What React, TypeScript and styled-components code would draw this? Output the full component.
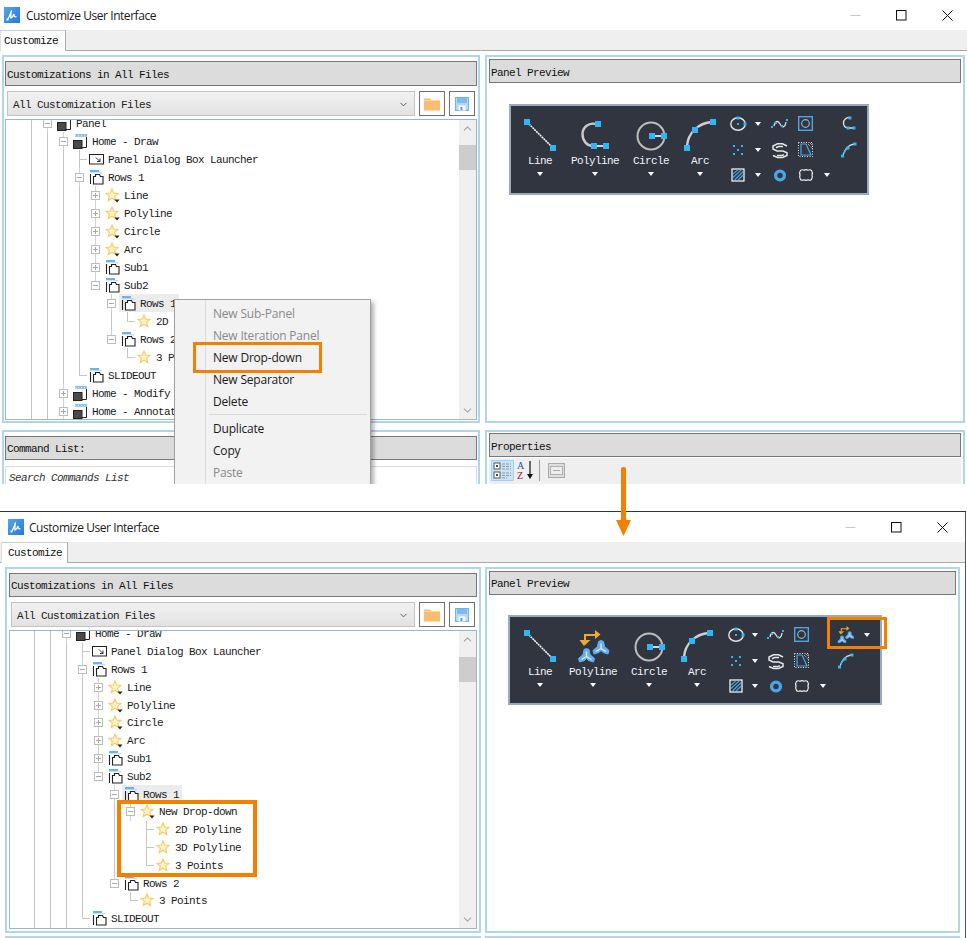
import React from 'react';
import styled, { createGlobalStyle } from 'styled-components';
import { ChevronDown, ChevronUp } from 'lucide-react';

const MONO = '"Liberation Mono", "DejaVu Sans Mono", monospace';
const UI = '"Open Sans", "Noto Sans", sans-serif';
const ORANGE = '#f58000';
const BLUE = '#33b5f5';
const ACCENT = '#4ba6e8';

const GlobalStyle = createGlobalStyle`
  html, body { margin: 0; padding: 0; background: #fff; }
  * { box-sizing: border-box; }
`;

const Page = styled.div`
  position: relative;
  width: 967px;
  height: 938px;
  overflow: hidden;
  background: #fff;
  font-family: ${MONO};
  font-size: 11px;
  letter-spacing: -0.6px;
  color: #111;
`;

const Win = styled.div<{ $height: number; $framed?: boolean }>`
  position: relative;
  height: ${p => p.$height}px;
  overflow: hidden;
  background: #fff;
  ${p => p.$framed && 'margin-top: 27px; border-top: 1px solid #333; border-right: 1px solid #555; width: 966px;'}
`;

const TitleBar = styled.div<{ $left: number; $gap: number }>`
  display: flex;
  align-items: center;
  height: 30px;
  padding-left: ${p => p.$left}px;
  gap: ${p => p.$gap}px;
`;

const TitleText = styled.span`
  font-family: ${UI};
  font-size: 12px;
  letter-spacing: -0.45px;
  color: #1a1a1a;
`;

const WinButtons = styled.div<{ $shift: number }>`
  display: flex;
  margin-left: auto;
  margin-right: ${p => p.$shift}px;
`;

const WinButton = styled.div`
  display: flex;
  align-items: center;
  justify-content: center;
  width: 46px;
  height: 30px;
`;

const TabStrip = styled.div<{ $height: number }>`
  display: flex;
  height: ${p => p.$height}px;
  background: #efefef;
  border-bottom: 1px solid #aaa;
`;

const Tab = styled.div<{ $left: number; $width: number; $pad: number }>`
  width: ${p => p.$width}px;
  margin-left: ${p => p.$left}px;
  padding-left: ${p => p.$pad}px;
  height: calc(100% + 1px);
  line-height: 20px;
  background: #fff;
  border-top: 1px solid #ccc;
  border-left: 1px solid #ddd;
  border-right: 1px solid #aaa;
`;

const Body = styled.div<{ $left: number; $columns: string; $rows: string; $gap: number; $rowGap: number }>`
  display: grid;
  grid-template-columns: ${p => p.$columns};
  grid-template-rows: ${p => p.$rows};
  column-gap: ${p => p.$gap}px;
  row-gap: ${p => p.$rowGap}px;
  padding: 4px 0 0 ${p => p.$left}px;
`;

const Panel = styled.div<{ $side: number; $top: number }>`
  display: flex;
  flex-direction: column;
  min-height: 0;
  overflow: hidden;
  border: 2px solid #aed8e8;
  padding: ${p => p.$top}px ${p => p.$side}px 0;
  background: #fff;
`;

const PanelHeader = styled.div<{ $height: number; $nudge?: number }>`
  flex: none;
  height: ${p => p.$height}px;
  line-height: ${p => p.$height - 2}px;
  padding: ${p => 1 + (p.$nudge ?? 0)}px 0 0 1px;
  background: #dcdcdc;
  border: 1px solid #777;
`;

const ComboRow = styled.div`
  flex: none;
  display: flex;
  gap: 4px;
  height: 25px;
  margin: 5px 2px 3px;
`;

const Combo = styled.div`
  flex: 1;
  display: flex;
  align-items: center;
  justify-content: space-between;
  padding: 2px 5px 0;
  background: linear-gradient(#f2f2f2, #e2e2e2);
  border: 1px solid #c4c4c4;
  color: #222;
`;

const IconButton = styled.div`
  display: flex;
  align-items: center;
  justify-content: center;
  width: 26px;
  background: #fff;
  border: 1px solid #6f6f6f;
`;

const TreeBox = styled.div<{ $height: number }>`
  flex: none;
  display: flex;
  height: ${p => p.$height}px;
  border: 1px solid #9fb6c6;
  overflow: hidden;
`;

const TreeList = styled.div<{ $left: number }>`
  flex: 1;
  min-width: 0;
  overflow: hidden;
  padding-left: ${p => p.$left}px;
`;

const TreeInner = styled.div`
  margin-top: -6px;
`;

const Scrollbar = styled.div`
  flex: none;
  display: flex;
  flex-direction: column;
  align-items: stretch;
  width: 17px;
  background: #f0f0f0;
  color: #a6a6a6;
`;

const ScrollButton = styled.div<{ $end?: boolean }>`
  display: flex;
  justify-content: center;
  align-items: center;
  height: 17px;
  ${p => p.$end && 'margin-top: auto;'}
`;

const ScrollThumb = styled.div<{ $top: number }>`
  height: 25px;
  margin-top: ${p => p.$top}px;
  background: #cdcdcd;
`;

const Row = styled.div<{ $height: number }>`
  display: flex;
  align-items: stretch;
  height: ${p => p.$height}px;
  white-space: nowrap;
`;

const GuideCell = styled.span<{ $on: boolean }>`
  flex: none;
  width: 16px;
  ${p => p.$on && `
    background: linear-gradient(#c6c6c6, #c6c6c6) 7.5px 0 / 1px 100% no-repeat;
  `}
`;

const ExpanderCell = styled.span<{ $last?: boolean }>`
  flex: none;
  display: flex;
  align-items: center;
  justify-content: center;
  width: 16px;
  background: linear-gradient(#d2d2d2, #d2d2d2) 7.5px 0 / 1px ${p => (p.$last ? '50%' : '100%')} no-repeat;
`;

const ExpanderBox = styled.span<{ $open: boolean }>`
  display: block;
  width: 9px;
  height: 9px;
  background-color: #fff;
  border: 1px solid #bcbcbc;
  background-image: linear-gradient(#a8a8a8, #a8a8a8)${p => (p.$open ? '' : ', linear-gradient(#a8a8a8, #a8a8a8)')};
  background-size: 5px 1px${p => (p.$open ? '' : ', 1px 5px')};
  background-position: center${p => (p.$open ? '' : ', center')};
  background-repeat: no-repeat;
`;

const ConnectorCell = styled.span<{ $corner: boolean }>`
  flex: none;
  width: 16px;
  background:
    linear-gradient(#c6c6c6, #c6c6c6) 7.5px 0 / 1px ${p => (p.$corner ? '50%' : '100%')} no-repeat,
    linear-gradient(#c6c6c6, #c6c6c6) 8px 50% / 8px 1px no-repeat;
`;

const NodeBody = styled.span<{ $selected?: boolean }>`
  display: flex;
  align-items: center;
  padding-right: 3px;
  background: ${p => (p.$selected ? '#ececec' : 'transparent')};
`;

const NodeIcon = styled.span`
  display: flex;
  align-items: center;
  width: 21px;
  padding-left: 2px;
`;

const NodeLabel = styled.span`
  padding-top: 1px;
  color: #1a1a1a;
`;

const Ribbon = styled.div<{ $width: number; $height: number; $top: number; $left: number }>`
  flex: none;
  display: flex;
  width: ${p => p.$width}px;
  height: ${p => p.$height}px;
  margin: ${p => p.$top}px 0 0 ${p => p.$left}px;
  background: #30353f;
  border: 2px solid #9aa9bb;
`;

const LargeTool = styled.div<{ $width: number }>`
  flex: none;
  display: flex;
  flex-direction: column;
  align-items: center;
  width: ${p => p.$width}px;
  padding-top: 13px;
`;

const LargeIcon = styled.div`
  flex: none;
  height: 36px;
  display: flex;
  justify-content: center;
`;

const ToolLabel = styled.div`
  height: 12px;
  line-height: 13px;
  color: #eef4fb;
  white-space: nowrap;
`;

const Caret = styled.span`
  display: block;
  width: 0;
  height: 0;
  border-left: 3px solid transparent;
  border-right: 3px solid transparent;
  border-top: 4px solid #fff;
`;

const LargeCaret = styled(Caret)`
  margin-top: 5px;
`;

const SmallGrid = styled.div<{ $columns: string; $left: number }>`
  display: grid;
  grid-template-columns: ${p => p.$columns};
  grid-auto-rows: 25.5px;
  margin-left: ${p => p.$left}px;
  padding-top: 5.5px;
`;

const SmallCell = styled.div`
  display: flex;
  align-items: center;
  justify-content: center;
`;

const SearchBox = styled.div`
  flex: none;
  height: 30px;
  margin-top: 6px;
  padding: 5px 3px;
  line-height: 13px;
  font-style: italic;
  background: #fff;
  border: 1px solid #dcdcdc;
  color: #333;
`;

const PropToolbar = styled.div`
  flex: 1;
  display: flex;
  align-items: flex-start;
  padding: 2px 0 0 2px;
  margin-top: 1px;
  background: #efefef;
`;

const ToolButton = styled.div<{ $active?: boolean }>`
  display: flex;
  align-items: center;
  justify-content: center;
  width: 23px;
  height: 21px;
  ${p => p.$active && 'background: #cce4f7; border: 1px solid #99d1ff;'}
`;

const ToolSep = styled.div`
  width: 1px;
  height: 21px;
  margin: 0 5px 0 2px;
  background: #a0a0a0;
`;

const ContextMenu = styled.div`
  position: absolute;
  left: 174px;
  top: 299px;
  width: 197px;
  height: 210px;
  padding-top: 2.5px;
  font-family: ${UI};
  font-size: 12px;
  letter-spacing: -0.2px;
  background: linear-gradient(90deg, #f2f2f2 30px, #dedede 30px, #dedede 31px, #f2f2f2 31px);
  border: 1px solid #a0a0a0;
  box-shadow: 3px 3px 4px rgba(0, 0, 0, 0.3);
`;

const MenuItem = styled.div<{ $disabled?: boolean }>`
  height: 22px;
  line-height: 22px;
  padding-left: 38px;
  color: ${p => (p.$disabled ? '#8a8a8a' : '#1a1a1a')};
`;

const MenuSep = styled.div`
  height: 1px;
  margin: 1.5px 3px 3px 34px;
  background: #d8d8d8;
`;

const Callout = styled.div<{ $x: number; $y: number; $w: number; $h: number; $border: number }>`
  position: absolute;
  left: ${p => p.$x}px;
  top: ${p => p.$y}px;
  width: ${p => p.$w}px;
  height: ${p => p.$h}px;
  border: ${p => p.$border}px solid ${ORANGE};
  pointer-events: none;
`;

const FlowArrow = styled.svg`
  position: absolute;
  left: 614px;
  top: 466px;
`;

function AppLogo() {
  return (
    <svg width="16" height="16" viewBox="0 0 16 16">
      <defs>
        <linearGradient id="logoFill" x1="0" y1="0" x2="1" y2="1">
          <stop offset="0" stopColor="#4ea6ee" />
          <stop offset="1" stopColor="#2a78d8" />
        </linearGradient>
      </defs>
      <rect width="16" height="16" fill="url(#logoFill)" />
      <path d="M4 12 C5.5 9.5 6.5 6.5 7.5 3.5 C7 7 6.5 9 7 11 C8.5 10 9.5 8.5 10 7 C10 9 10.5 10.5 12.5 9.5" fill="none" stroke="#fff" strokeWidth="1.3" />
      <rect x="2.5" y="11.5" width="2" height="2" fill="#fff" />
    </svg>
  );
}

function WindowControls({ shift }: { shift: number }) {
  return (
    <WinButtons $shift={shift}>
      <WinButton>
        <svg width="11" height="11" viewBox="0 0 11 11"><path d="M0.5 5.5 H10.5" stroke="#c8c8c8" /></svg>
      </WinButton>
      <WinButton>
        <svg width="11" height="11" viewBox="0 0 11 11"><rect x="0.5" y="0.5" width="9.5" height="9.5" fill="none" stroke="#111" /></svg>
      </WinButton>
      <WinButton>
        <svg width="11" height="11" viewBox="0 0 11 11"><path d="M0.5 0.5 L10.5 10.5 M10.5 0.5 L0.5 10.5" stroke="#111" /></svg>
      </WinButton>
    </WinButtons>
  );
}

function FolderIcon() {
  return (
    <svg width="16" height="14" viewBox="0 0 16 14">
      <path d="M0 1.5 H6 L7.5 3 H16 V13.5 H0 Z" fill="#fdbb6e" />
      <path d="M0 3.5 H16" stroke="#fdd6a4" />
    </svg>
  );
}

function SaveIcon() {
  return (
    <svg width="14" height="14" viewBox="0 0 14 14">
      <rect x="0.5" y="0.5" width="13" height="13" fill="#b5d9f5" stroke="#6fb1e8" />
      <rect x="2" y="1" width="10" height="5" fill="#7dbbec" />
      <rect x="3.5" y="8.5" width="7" height="5" fill="#fff" />
      <rect x="5.5" y="10" width="2" height="3" fill="#4f9bdc" />
    </svg>
  );
}

function PanelNodeIcon() {
  return (
    <svg width="15" height="15" viewBox="0 0 15 15">
      <path d="M2 1.4 H14" stroke="#86c1ee" strokeWidth="2.8" />
      <path d="M2 1.4 H14" stroke="#fff" strokeWidth="0.7" strokeDasharray="1 2" />
      <path d="M9 13.5 H13.5 V3" fill="none" stroke="#222" />
      <rect x="0.5" y="6.5" width="8.5" height="8" fill="#4a4a4a" stroke="#222" />
    </svg>
  );
}

function LauncherIcon() {
  return (
    <svg width="15" height="11" viewBox="0 0 15 11">
      <rect x="0.5" y="0.5" width="14" height="9.5" fill="#fff" stroke="#222" />
      <path d="M7 3.5 L11 7.5 M11 4.5 V7.5 H8" fill="none" stroke="#333" />
    </svg>
  );
}

function RowsIcon() {
  return (
    <svg width="15" height="15" viewBox="0 0 15 15">
      <path d="M1 1.2 H10" stroke="#6db3ea" strokeWidth="2.4" />
      <path d="M1.5 4 V14" stroke="#222" strokeWidth="1.1" />
      <path d="M4.5 14 V6.5 H6.5 V4.5 H10.5 L11.5 6.5 H14 V14 Z" fill="#fff" stroke="#222" strokeWidth="1.1" />
      <path d="M10 2.8 H13" stroke="#a9d4f4" />
    </svg>
  );
}

function StarIcon({ drop }: { drop?: boolean }) {
  return (
    <svg width="15" height="15" viewBox="0 0 15 15">
      <path d="M7 1 L8.7 5 L13 5.4 L9.7 8.2 L10.7 12.5 L7 10.2 L3.3 12.5 L4.3 8.2 L1 5.4 L5.3 5 Z" fill="#fff2c8" stroke="#f5cc62" strokeWidth="1.1" />
      {drop && <path d="M9.5 11.5 H14.5 L12 14.5 Z" fill="#222" />}
    </svg>
  );
}

type NodeKind = 'panel' | 'launcher' | 'rows' | 'star' | 'leaf';
type Handle = 'open' | 'closed' | 'openEnd' | 'tee' | 'corner';

interface TreeNode {
  depth: number;
  handle: Handle;
  kind: NodeKind;
  label: string;
  guides: number[];
  selected?: boolean;
}

const nodeIcons: Record<NodeKind, React.ReactNode> = {
  panel: <PanelNodeIcon />,
  launcher: <LauncherIcon />,
  rows: <RowsIcon />,
  star: <StarIcon drop />,
  leaf: <StarIcon />,
};

const g3 = [1, 2, 3];
const g4 = [1, 2, 3, 4];
const g46 = [1, 2, 3, 4, 6];

const sharedUpper: TreeNode[] = [
  { depth: 3, handle: 'open', kind: 'panel', label: 'Home - Draw', guides: [1, 2] },
  { depth: 4, handle: 'tee', kind: 'launcher', label: 'Panel Dialog Box Launcher', guides: g3 },
  { depth: 4, handle: 'open', kind: 'rows', label: 'Rows 1', guides: g3 },
  { depth: 5, handle: 'closed', kind: 'star', label: 'Line', guides: g4 },
  { depth: 5, handle: 'closed', kind: 'star', label: 'Polyline', guides: g4 },
  { depth: 5, handle: 'closed', kind: 'star', label: 'Circle', guides: g4 },
  { depth: 5, handle: 'closed', kind: 'star', label: 'Arc', guides: g4 },
  { depth: 5, handle: 'closed', kind: 'rows', label: 'Sub1', guides: g4 },
  { depth: 5, handle: 'openEnd', kind: 'rows', label: 'Sub2', guides: g4 },
  { depth: 6, handle: 'open', kind: 'rows', label: 'Rows 1', guides: g4, selected: true },
];

const beforeNodes: TreeNode[] = [
  { depth: 2, handle: 'open', kind: 'panel', label: 'Panel', guides: [1] },
  ...sharedUpper,
  { depth: 7, handle: 'corner', kind: 'leaf', label: '2D Polyline', guides: g46 },
  { depth: 6, handle: 'openEnd', kind: 'rows', label: 'Rows 2', guides: g4 },
  { depth: 7, handle: 'corner', kind: 'leaf', label: '3 Points', guides: g4 },
  { depth: 4, handle: 'corner', kind: 'rows', label: 'SLIDEOUT', guides: g3 },
  { depth: 3, handle: 'closed', kind: 'panel', label: 'Home - Modify', guides: [1, 2] },
  { depth: 3, handle: 'closed', kind: 'panel', label: 'Home - Annotate', guides: [1, 2] },
];

const afterNodes: TreeNode[] = [
  ...sharedUpper,
  { depth: 7, handle: 'open', kind: 'star', label: 'New Drop-down', guides: g46 },
  { depth: 8, handle: 'tee', kind: 'leaf', label: '2D Polyline', guides: [1, 2, 3, 4, 6] },
  { depth: 8, handle: 'tee', kind: 'leaf', label: '3D Polyline', guides: [1, 2, 3, 4, 6] },
  { depth: 8, handle: 'corner', kind: 'leaf', label: '3 Points', guides: [1, 2, 3, 4, 6] },
  { depth: 6, handle: 'openEnd', kind: 'rows', label: 'Rows 2', guides: g4 },
  { depth: 7, handle: 'corner', kind: 'leaf', label: '3 Points', guides: g4 },
  { depth: 4, handle: 'corner', kind: 'rows', label: 'SLIDEOUT', guides: g3 },
];

function TreeRow({ node, height }: { node: TreeNode; height: number }) {
  const { depth, handle, kind, label, guides, selected } = node;
  return (
    <Row $height={height}>
      {Array.from({ length: depth }, (_, i) => (
        <GuideCell key={i} $on={guides.includes(i)} />
      ))}
      {handle === 'tee' || handle === 'corner' ? (
        <ConnectorCell $corner={handle === 'corner'} />
      ) : (
        <ExpanderCell $last={handle === 'openEnd'}>
          <ExpanderBox $open={handle !== 'closed'} />
        </ExpanderCell>
      )}
      <NodeBody $selected={selected}>
        <NodeIcon>{nodeIcons[kind]}</NodeIcon>
        <NodeLabel>{label}</NodeLabel>
      </NodeBody>
    </Row>
  );
}

function Squares({ at }: { at: [number, number][] }) {
  return (
    <>
      {at.map(([x, y]) => (
        <rect key={`${x}-${y}`} x={x} y={y} width="6" height="6" fill={BLUE} />
      ))}
    </>
  );
}

function LineTool() {
  return (
    <svg width="36" height="36" viewBox="0 0 36 36">
      <path d="M5 3 L31 29" stroke="#fff" strokeWidth="1.5" strokeDasharray="2 0.6" />
      <Squares at={[[2, 0], [28, 26]]} />
    </svg>
  );
}

function PolylineTool() {
  return (
    <svg width="36" height="36" viewBox="0 0 36 36">
      <path d="M19 5 C11 3 5.5 9 5.5 15 C5.5 22 10 27 16 27" fill="none" stroke="#c9c9c9" strokeWidth="2.4" />
      <path d="M19 27 H28" stroke="#fff" strokeWidth="1.6" />
      <Squares at={[[18, 2], [14, 24], [26, 24]]} />
    </svg>
  );
}

function CircleTool() {
  return (
    <svg width="36" height="36" viewBox="0 0 36 36">
      <circle cx="18" cy="17" r="13.5" fill="none" stroke="#bdbdbd" strokeWidth="2" />
      <path d="M21 17 H29" stroke="#fff" strokeWidth="1.6" />
      <Squares at={[[16, 14], [28, 14]]} />
    </svg>
  );
}

function ArcTool() {
  return (
    <svg width="36" height="36" viewBox="0 0 36 36">
      <path d="M5 27 C6 14 16 4 30 3" fill="none" stroke="#cfcfcf" strokeWidth="2.4" />
      <Squares at={[[28, 0], [10, 8], [2, 26]]} />
    </svg>
  );
}

function Tripod({ x, y }: { x: number; y: number }) {
  return (
    <g transform={`translate(${x} ${y})`}>
      <path
        d="M0 -7 L2.5 -6 L3.5 -1 L8 3 L7 6.5 L2 5 L0 3 L-2 5 L-7 6.5 L-8 3 L-3.5 -1 L-2.5 -6 Z"
        fill="#62aef0"
        stroke="#62aef0"
        strokeLinejoin="round"
      />
      <path d="M0 -4 V1 L5 4 M0 1 L-5 4" fill="none" stroke="#d6eafb" strokeWidth="1.4" />
    </g>
  );
}

function MultiGlyph() {
  return (
    <>
      <path d="M10 15 V10 H22" fill="none" stroke="#f0a92c" strokeWidth="2" />
      <path d="M20 5 L25.5 9.5 L20 14 Z" fill="#f0a92c" />
      <path d="M4.5 15 H15.5 L9 21 Z" fill="#f0a92c" />
      <Tripod x={11.5} y={30.5} />
      <Tripod x={26} y={22.5} />
    </>
  );
}

function MultiTool() {
  return (
    <svg width="40" height="36" viewBox="-2 5 40 36">
      <MultiGlyph />
    </svg>
  );
}

function Dot({ x, y, size = 2 }: { x: number; y: number; size?: number }) {
  return <rect x={x - size / 2} y={y - size / 2} width={size} height={size} fill={BLUE} />;
}

const smallIcons: Record<string, React.ReactNode> = {
  circle: (
    <>
      <ellipse cx="12" cy="11" rx="7.2" ry="6.2" fill="none" stroke="#e2e2e2" strokeWidth="1.4" />
      <Dot x={12} y={5} size={3} />
      <Dot x={19} y={11} size={3} />
      <Dot x={12} y={11} />
    </>
  ),
  spline: (
    <>
      <path d="M6 13 C7 8 10 7 12 11 C14 15 17 15 18 9" fill="none" stroke="#e2e2e2" strokeWidth="1.3" />
      <Dot x={4} y={14} />
      <Dot x={8} y={10} />
      <Dot x={14} y={13} />
      <Dot x={19} y={7} />
    </>
  ),
  square: (
    <>
      <rect x="4.7" y="3.7" width="13.6" height="13.6" fill="none" stroke={ACCENT} strokeWidth="1.4" />
      <circle cx="11.5" cy="10.5" r="3.8" fill="none" stroke="#8fb6d6" strokeWidth="1.2" />
    </>
  ),
  points: (
    <>
      <Dot x={8} y={7} />
      <Dot x={16} y={7} />
      <Dot x={12} y={11} />
      <Dot x={8} y={15} />
      <Dot x={16} y={15} />
    </>
  ),
  offset: (
    <path d="M19 7 L14.5 4.8 H9.5 L5 7 V10 L9 12 H15 L19 13.8 V16.5 L14.5 18.5 H9.5 L5 16.5 M8 8.8 L10.5 7.6 H15 M16 15.8 L13.5 16.6 H9" fill="none" stroke="#e6e6e6" strokeWidth="1.5" />
  ),
  region: (
    <>
      <rect x="4.5" y="3.5" width="14" height="14" fill="none" stroke="#e6e6e6" strokeDasharray="1 1.5" />
      <path d="M7 5 H12 L17 16 H7 Z" fill="#30353f" stroke={ACCENT} strokeWidth="1.2" />
      <path d="M14 5 L19 10 M16 4 L19 7" stroke="#cfcfcf" strokeDasharray="1 1" />
    </>
  ),
  hatch: (
    <>
      <rect x="6" y="5" width="12" height="12" fill="none" stroke="#fff" strokeWidth="1.2" />
      <path d="M7 10 L12 5.6 M7 13.5 L15.5 5.6 M8.5 16 L17.2 7.5 M12 16 L17.2 11" stroke={ACCENT} strokeWidth="1.1" />
    </>
  ),
  donut: <circle cx="12" cy="11.5" r="4.4" fill="none" stroke={ACCENT} strokeWidth="3.4" />,
  cloud: (
    <path d="M6.5 6.5 Q8 5.2 10 6.2 Q12 5.2 14 6.2 Q16 5.2 17.5 6.5 Q19 8.5 18 11 Q19 13.5 17.5 15.5 Q16 16.8 14 15.8 Q12 16.8 10 15.8 Q8 16.8 6.5 15.5 Q5 13.5 6 11 Q5 8.5 6.5 6.5 Z" fill="none" stroke="#f2f2f2" strokeWidth="1.2" />
  ),
  cpoly: (
    <>
      <path d="M13 4.5 C9 4 6.5 7 6.5 10 C6.5 13.5 9 15 12 15 H16" fill="none" stroke="#dcdcdc" strokeWidth="1.4" />
      <Dot x={13} y={5} size={3} />
      <Dot x={11} y={15} size={3} />
      <Dot x={17} y={15} size={3} />
    </>
  ),
  arc: (
    <>
      <path d="M6 17 C7 11 11 6 17 5" fill="none" stroke="#dcdcdc" strokeWidth="1.4" />
      <path d="M7 14 C8 12 9 10 11 9" fill="none" stroke={BLUE} strokeWidth="1.4" />
      <Dot x={5.5} y={17} size={3} />
      <Dot x={11} y={9} size={3} />
      <Dot x={18} y={5} size={3} />
    </>
  ),
  multi: <MultiGlyph />,
};

function SmallTool({ name }: { name: string }) {
  if (name === '') return <SmallCell />;
  if (name === 'caret') return <SmallCell><Caret /></SmallCell>;
  if (name === 'multi') {
    return (
      <SmallCell>
        <svg width="20" height="20" viewBox="0 3 38 38">{smallIcons.multi}</svg>
      </SmallCell>
    );
  }
  return (
    <SmallCell>
      <svg width="24" height="22" viewBox="0 0 24 22">{smallIcons[name]}</svg>
    </SmallCell>
  );
}

function PanelRibbon({ variant }: { variant: 'before' | 'after' }) {
  const before = variant === 'before';
  const widths = before ? [58, 52, 60, 38] : [60, 46, 66, 30];
  const tools: [string, React.ReactNode][] = [
    ['Line', <LineTool />],
    ['Polyline', before ? <PolylineTool /> : <MultiTool />],
    ['Circle', <CircleTool />],
    ['Arc', <ArcTool />],
  ];
  const cells = before
    ? ['circle', 'caret', 'spline', 'square', '', 'cpoly',
       'points', 'caret', 'offset', 'region', '', 'arc',
       'hatch', 'caret', 'donut', 'cloud', 'caret', '']
    : ['circle', 'caret', 'spline', 'square', '', 'multi', 'caret',
       'points', 'caret', 'offset', 'region', '', 'arc', '',
       'hatch', 'caret', 'donut', 'cloud', 'caret', '', ''];
  return (
    <Ribbon
      $width={before ? 360 : 374}
      $height={before ? 91 : 90}
      $top={before ? 21 : 20}
      $left={before ? 20 : 19}
    >
      {tools.map(([label, icon], i) => (
        <LargeTool key={label} $width={widths[i]}>
          <LargeIcon>{icon}</LargeIcon>
          <ToolLabel>{label}</ToolLabel>
          <LargeCaret />
        </LargeTool>
      ))}
      <SmallGrid
        $left={before ? 7 : 12}
        $columns={before ? '24px 16px 28px 24px 18px 26px' : '24px 14px 28px 24px 18px 28px 14px'}
      >
        {cells.map((name, i) => <SmallTool key={i} name={name} />)}
      </SmallGrid>
    </Ribbon>
  );
}

function FilesPanel({ nodes, rowHeight, side, treeHeight, headerHeight, headerNudge, treeLeft, thumbTop }: {
  nodes: TreeNode[];
  rowHeight: number;
  side: number;
  treeHeight: number;
  headerHeight: number;
  headerNudge: number;
  treeLeft: number;
  thumbTop: number;
}) {
  return (
    <Panel $side={side} $top={4}>
      <PanelHeader $height={headerHeight} $nudge={headerNudge}>Customizations in All Files</PanelHeader>
      <ComboRow>
        <Combo>
          All Customization Files
          <ChevronDown size={11} strokeWidth={2} color="#555" />
        </Combo>
        <IconButton><FolderIcon /></IconButton>
        <IconButton><SaveIcon /></IconButton>
      </ComboRow>
      <TreeBox $height={treeHeight}>
        <TreeList $left={treeLeft}>
          <TreeInner>
            {nodes.map((node, i) => <TreeRow key={i} node={node} height={rowHeight} />)}
          </TreeInner>
        </TreeList>
        <Scrollbar>
          <ScrollButton><ChevronUp size={13} strokeWidth={2} /></ScrollButton>
          <ScrollThumb $top={thumbTop} />
          <ScrollButton $end><ChevronDown size={13} strokeWidth={2} /></ScrollButton>
        </Scrollbar>
      </TreeBox>
    </Panel>
  );
}

function PropertyTools() {
  return (
    <PropToolbar>
      <ToolButton $active>
        <svg width="19" height="17" viewBox="0 0 19 17">
          <rect x="1" y="1" width="6" height="6" fill="#fff" stroke="#555" />
          <rect x="1" y="10" width="6" height="6" fill="#fff" stroke="#555" />
          <path d="M3 4 H5 M4 3 V5 M3 13 H5 M4 12 V14" stroke="#111" />
          <path d="M9 2 H18 M9 4.5 H18 M9 7 H18 M9 11 H18 M9 13.5 H18 M9 16 H14" stroke="#8c9aa8" strokeDasharray="3 1" />
        </svg>
      </ToolButton>
      <ToolButton>
        <svg width="20" height="19" viewBox="0 0 20 19">
          <text x="1" y="8" fontFamily='"Liberation Serif", serif' fontSize="10" letterSpacing="0" fill="#2a4fc0">A</text>
          <text x="1" y="18" fontFamily='"Liberation Serif", serif' fontSize="10" letterSpacing="0" fill="#a02020">Z</text>
          <path d="M14 0 V16" stroke="#111" strokeWidth="1.2" />
          <path d="M11 13 H17 L14 18 Z" fill="#111" />
        </svg>
      </ToolButton>
      <ToolSep />
      <ToolButton>
        <svg width="17" height="15" viewBox="0 0 17 15">
          <rect x="0.5" y="0.5" width="16" height="14" fill="#dedede" stroke="#a8a8a8" />
          <rect x="2.5" y="3.5" width="12" height="8" fill="#eee" stroke="#b0b0b0" />
          <path d="M5 7.5 H12" stroke="#a8a8a8" />
        </svg>
      </ToolButton>
    </PropToolbar>
  );
}

function App() {
  return (
    <Page>
      <GlobalStyle />

      <Win $height={484}>
        <TitleBar $left={4} $gap={6}>
          <AppLogo />
          <TitleText>Customize User Interface</TitleText>
          <WindowControls shift={-3} />
        </TitleBar>
        <TabStrip $height={21}>
          <Tab $left={0} $width={66} $pad={3}>Customize</Tab>
        </TabStrip>
        <Body $left={2} $columns="478px 480px" $rows="368px 60px" $gap={5} $rowGap={7}>
          <FilesPanel
            nodes={beforeNodes}
            rowHeight={18}
            side={1}
            treeHeight={301}
            headerHeight={25}
            headerNudge={1}
            treeLeft={1}
            thumbTop={8}
          />
          <Panel $side={2} $top={2}>
            <PanelHeader $height={24} $nudge={1}>Panel Preview</PanelHeader>
            <PanelRibbon variant="before" />
          </Panel>
          <Panel $side={1} $top={4}>
            <PanelHeader $height={24}>Command List:</PanelHeader>
            <SearchBox>Search Commands List</SearchBox>
          </Panel>
          <Panel $side={2} $top={1}>
            <PanelHeader $height={24} $nudge={1}>Properties</PanelHeader>
            <PropertyTools />
          </Panel>
        </Body>
        <ContextMenu>
          <MenuItem $disabled>New Sub-Panel</MenuItem>
          <MenuItem $disabled>New Iteration Panel</MenuItem>
          <MenuItem>New Drop-down</MenuItem>
          <MenuItem>New Separator</MenuItem>
          <MenuItem>Delete</MenuItem>
          <MenuSep />
          <MenuItem>Duplicate</MenuItem>
          <MenuItem>Copy</MenuItem>
          <MenuItem $disabled>Paste</MenuItem>
        </ContextMenu>
      </Win>

      <Win $height={427} $framed>
        <TitleBar $left={8} $gap={5}>
          <AppLogo />
          <TitleText>Customize User Interface</TitleText>
          <WindowControls shift={0} />
        </TitleBar>
        <TabStrip $height={21}>
          <Tab $left={1} $width={67} $pad={6}>Customize</Tab>
        </TabStrip>
        <Body $left={5} $columns="476px 475px" $rows="366px 30px" $gap={4} $rowGap={3}>
          <FilesPanel
            nodes={afterNodes}
            rowHeight={17.8}
            side={2}
            treeHeight={299}
            headerHeight={24}
            headerNudge={0}
            treeLeft={0}
            thumbTop={9}
          />
          <Panel $side={2} $top={2}>
            <PanelHeader $height={24}>Panel Preview</PanelHeader>
            <PanelRibbon variant="after" />
          </Panel>
          <Panel $side={2} $top={4} />
          <Panel $side={2} $top={2} />
        </Body>
      </Win>

      <Callout $x={193} $y={342} $w={129} $h={31} $border={3.5} />
      <Callout $x={117} $y={800} $w={140} $h={77} $border={4} />
      <Callout $x={827} $y={617} $w={60} $h={32} $border={3.5} />
      <FlowArrow width="18" height="70" viewBox="0 0 18 70">
        <rect x="7" y="1" width="5" height="55" rx="2" fill={ORANGE} />
        <path d="M2 54 H17 L9.5 70 Z" fill={ORANGE} />
      </FlowArrow>
    </Page>
  );
}

export default App;
